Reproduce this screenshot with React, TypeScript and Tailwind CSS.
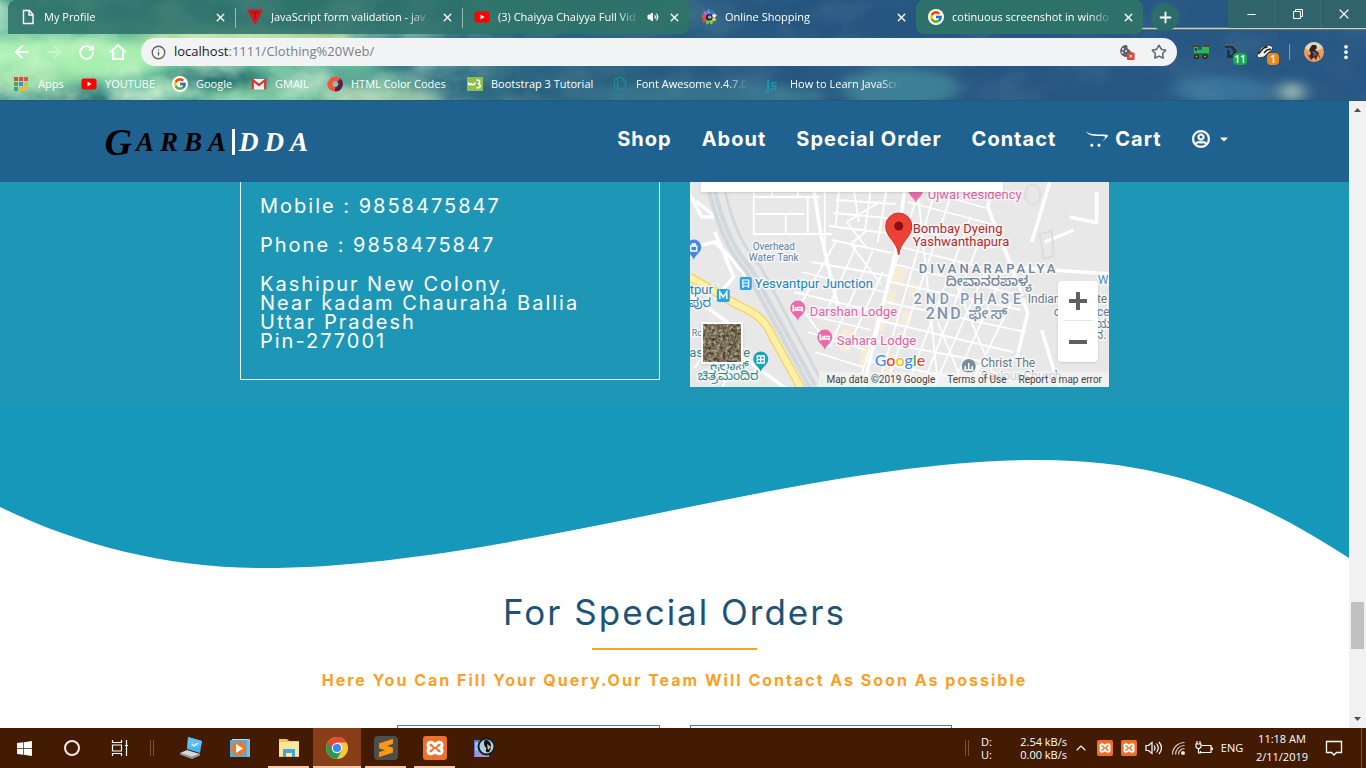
import type { ReactNode } from "react";
import {
  ArrowLeft,
  ArrowRight,
  ChevronUp,
  EllipsisVertical,
  Info,
  Minus,
  Plus,
  RotateCw,
  Star,
  Volume2,
  X,
} from "lucide-react";
import { FcGoogle } from "react-icons/fc";
import { FaCaretDown, FaOpencart, FaRegUserCircle, FaWindows } from "react-icons/fa";
import { SiSublimetext } from "react-icons/si";

function Sky() {
  const clouds: [number, number, number, number, string][] = [
    [120, 60, 260, 40, "#63bd9c"],
    [60, 58, 110, 20, "#a9f0b0"],
    [250, 40, 110, 12, "#b9dfa0"],
    [20, 95, 110, 12, "#4c9c92"],
    [340, 84, 80, 16, "#5fa898"],
    [380, 98, 60, 10, "#8fbf9f"],
    [215, 78, 50, 12, "#28746f"],
    [100, 101, 60, 7, "#27716d"],
    [270, 98, 60, 9, "#79c8a0"],
    [30, 78, 50, 12, "#93dca2"],
    [700, 96, 130, 14, "#35718c"],
    [900, 88, 60, 20, "#3d7f95"],
    [1220, 90, 50, 14, "#37739a"],
    [1292, 92, 10, 10, "#b5d0be"],
  ];
  return (
    <svg className="absolute inset-0 h-full w-full" viewBox="0 0 1366 101" preserveAspectRatio="none" aria-hidden="true">
      <defs>
        <linearGradient id="sky" x1="0" x2="1" y1="0" y2="0">
          <stop offset="0" stopColor="#4fa893" />
          <stop offset="0.25" stopColor="#3d8288" />
          <stop offset="0.38" stopColor="#2a6480" />
          <stop offset="0.6" stopColor="#255580" />
          <stop offset="1" stopColor="#275784" />
        </linearGradient>
        <filter id="soft" x="-50%" y="-50%" width="200%" height="200%">
          <feGaussianBlur stdDeviation="9 5" />
        </filter>
        <filter id="wisps" x="0" y="0" width="100%" height="100%">
          <feTurbulence type="fractalNoise" baseFrequency="0.018 0.026" numOctaves="4" seed="21" />
          <feColorMatrix values="0 0 0 0 .72  0 0 0 0 .95  0 0 0 0 .7  2 0 0 0 -.8" />
        </filter>
        <linearGradient id="fade" x1="0" x2="1" y1="0" y2="0">
          <stop offset="0" stopColor="#fff" />
          <stop offset="0.28" stopColor="#bbb" />
          <stop offset="0.4" stopColor="#222" />
          <stop offset="1" stopColor="#111" />
        </linearGradient>
        <mask id="skymask">
          <rect width="1366" height="101" fill="url(#fade)" />
        </mask>
      </defs>
      <rect width="1366" height="101" fill="url(#sky)" />
      <g filter="url(#soft)">
        {clouds.map(([cx, cy, rx, ry, fill]) => (
          <ellipse key={`${cx}-${cy}`} cx={cx} cy={cy} rx={rx} ry={ry} fill={fill} />
        ))}
      </g>
      <g mask="url(#skymask)">
        <rect width="1366" height="101" filter="url(#wisps)" />
      </g>
      <path d="M1140 28.5H1366" stroke="#d8d3a0" strokeWidth="1.5" />
      <path d="M0 100.5H1366" stroke="#1f5a70" />
    </svg>
  );
}

function YouTubeIcon() {
  return (
    <svg viewBox="0 0 16 16" className="h-4 w-4 shrink-0" aria-hidden="true">
      <rect x="0.5" y="2.5" width="15" height="11" rx="2.5" fill="#f00" />
      <path d="M6.5 5.6v4.8L10.6 8z" fill="#fff" />
    </svg>
  );
}

function GoogleBadge() {
  return (
    <span className="flex h-4 w-4 shrink-0 items-center justify-center rounded-full bg-white">
      <FcGoogle size={14} />
    </span>
  );
}

function ValidationIcon() {
  return (
    <svg viewBox="0 0 16 16" className="h-4 w-4 shrink-0" aria-hidden="true">
      <path d="M0 0.5h16L8 16z" fill="#e0121c" />
      <path d="M4.500 3.500h7M8 3.500V10" stroke="#7e1f2c" strokeWidth="1.300" />
    </svg>
  );
}

function FlowerIcon() {
  const petals = ["#5f93e8", "#3f72e0", "#f0f0f4", "#e9d44a", "#8fcf4c", "#6dc04f", "#e34d4d", "#e3563f", "#b26ad1"];
  return (
    <svg viewBox="0 0 16 16" className="h-4 w-4 shrink-0" aria-hidden="true">
      {petals.map((c, i) => (
        <path key={c} d="M8 8 5.500 2 8 0l1.500 2.500z" fill={c} transform={`rotate(${i * 40} 8 8)`} />
      ))}
      <circle cx="8.300" cy="8.300" r="3.300" fill="#16243a" />
      <circle cx="8.800" cy="8" r="1.600" fill="#fff" />
      <circle cx="8.800" cy="8" r="0.700" fill="#16243a" />
    </svg>
  );
}

type TabData = { title: string; icon: ReactNode; sound?: boolean; shape: string };

const tabs: TabData[] = [
  {
    title: "My Profile",
    icon: (
      <svg viewBox="0 0 16 16" className="h-4 w-4 shrink-0" fill="none" stroke="#fff" strokeWidth="1.400" aria-hidden="true">
        <path d="M3.500 1.500h6l3.500 4v9H3.500zM9 1.500V6h4" />
      </svg>
    ),
    shape: "rounded-tl-lg bg-[#2d7069]/85",
  },
  { title: "JavaScript form validation - jav", icon: <ValidationIcon />, shape: "bg-[#2d7069]/85" },
  { title: "(3) Chaiyya Chaiyya Full Vid", icon: <YouTubeIcon />, sound: true, shape: "rounded-br-lg bg-[#2f7468]/90" },
  { title: "Online Shopping", icon: <FlowerIcon />, shape: "" },
  { title: "cotinuous screenshot in windo", icon: <GoogleBadge />, shape: "rounded-lg bg-[#2f7468]/90" },
];

function TabStrip() {
  return (
    <div className="relative flex h-[34px] items-start pl-2">
      {tabs.map((tab, i) => (
        <div key={tab.title} className={`relative flex h-full min-w-0 max-w-[227px] flex-1 items-center gap-2 pr-2 pl-3 ${tab.shape}`}>
          {(i === 1 || i === 2) && <span className="absolute top-2 left-0 h-5 w-px bg-white/50" />}
          {tab.icon}
          <a href="#tab" className="min-w-0 flex-1 overflow-hidden whitespace-nowrap [mask-image:linear-gradient(to_right,#000_85%,transparent)]">
            {tab.title}
          </a>
          {tab.sound && <Volume2 size={12} fill="#fff" className="shrink-0" />}
          <button aria-label={`Close ${tab.title}`} className="flex w-[14px] shrink-0 justify-center">
            <X size={13} strokeWidth={2.6} />
          </button>
        </div>
      ))}
      <button aria-label="New tab" className="mt-[3px] ml-2 flex h-7 w-7 shrink-0 items-center justify-center rounded-full bg-[#2c6d6b]">
        <Plus size={17} strokeWidth={2.6} />
      </button>
      <div className="ml-auto flex h-7 shrink-0">
        <button aria-label="Minimize" className="flex w-[46px] items-center justify-center bg-[#30636b]">
          <Minus size={13} strokeWidth={1.8} />
        </button>
        <button aria-label="Restore" className="flex w-[46px] items-center justify-center border-l border-[#3b6d72] bg-[#30636b]">
          <svg viewBox="0 0 12 12" className="h-3 w-3" fill="none" stroke="#fff" aria-hidden="true">
            <path d="M1.5 3.5h7v7h-7zM3.5 3.5v-2h7v7h-2" />
          </svg>
        </button>
        <button aria-label="Close window" className="flex w-[46px] items-center justify-center border-l border-[#3b6d72] bg-[#30636b]">
          <X size={16} strokeWidth={1.7} />
        </button>
      </div>
    </div>
  );
}

function ToolbarButton({ label, children }: { label: string; children: ReactNode }) {
  return (
    <button aria-label={label} className="flex h-8 w-8 shrink-0 items-center justify-center">
      {children}
    </button>
  );
}

function Toolbar() {
  return (
    <div className="relative flex h-9 items-center pr-1 pl-[6px]">
      <ToolbarButton label="Back"><ArrowLeft size={20} strokeWidth={2.4} /></ToolbarButton>
      <ToolbarButton label="Forward"><ArrowRight size={20} strokeWidth={2.2} className="opacity-30" /></ToolbarButton>
      <ToolbarButton label="Reload"><RotateCw size={17} strokeWidth={2.7} /></ToolbarButton>
      <ToolbarButton label="Home">
        <svg viewBox="0 0 18 18" className="h-[18px] w-[18px]" fill="none" stroke="#fff" strokeWidth="2" aria-hidden="true">
          <path d="M1 9.500 9 2l8 7.500M4 8v8h10V8" />
        </svg>
      </ToolbarButton>
      <div className="ml-[7px] flex h-7 min-w-0 flex-1 items-center rounded-full bg-[#f1f3f4] px-[10px] text-[#5f6368]">
        <Info size={15} strokeWidth={2.2} className="mr-2 shrink-0" />
        <a href="#address" className="min-w-0 flex-1 truncate text-[13px] text-[#7b7f84]">
          <span className="text-[#202124]">localhost</span>:1111/Clothing%20Web/
        </a>
        <svg viewBox="0 0 16 16" className="mr-4 h-4 w-4 shrink-0" aria-label="Cookies blocked" role="img">
          <path d="M6.5 1A6 6 0 1 0 13 8c-2-.2-2-1.500-2-2C9 5.500 8 4 8.500 2Q8 1 6.500 1z" fill="#5f6368" />
          <circle cx="4" cy="5" r="1" fill="#f1f3f4" />
          <circle cx="3.500" cy="8.500" r="0.900" fill="#f1f3f4" />
          <circle cx="7" cy="7" r="0.900" fill="#f1f3f4" />
          <rect x="8" y="8.500" width="7.500" height="7.500" rx="1" fill="#db4437" />
          <path d="m10.200 10.700 3 3m0-3-3 3" stroke="#fff" />
        </svg>
        <Star size={16} strokeWidth={2.2} />
      </div>
      <div className="flex shrink-0 items-center pl-2">
        <ToolbarButton label="Train extension">
          <svg viewBox="0 0 18 16" className="h-4 w-[18px]" aria-hidden="true">
            <path d="M1 1h6v2H6v3h4V3h5V1h2v9H2V3H1z" fill="#35b358" />
            <path d="M0 1h8v2H0zM13 0h4v3h-4z" fill="#54452a" />
            <path d="M3 4h2v3H3z" fill="#1c4050" />
            <path d="M2 9h15v2H2z" fill="#187c3c" />
            <circle cx="4.500" cy="12.500" r="2.600" fill="#1c2a2a" />
            <circle cx="13" cy="12.500" r="2.600" fill="#1c2a2a" />
            <circle cx="4.500" cy="12.500" r="1" fill="#df9d42" />
            <circle cx="13" cy="12.500" r="1" fill="#df9d42" />
          </svg>
        </ToolbarButton>
        <div className="relative">
          <ToolbarButton label="Download extension">
            <svg viewBox="0 0 16 16" className="mr-1 h-4 w-4" aria-hidden="true">
              <path d="M2 1h5a6 6 0 0 1 6.500 6.500A6 6 0 0 1 7 14H4V6h3v5a3 3 0 0 0 3-3.500A3.500 3.500 0 0 0 6.500 4H2z" fill="#26313d" />
              <path d="M2 1h5a6 6 0 0 1 6 4" stroke="#65717c" fill="none" />
            </svg>
          </ToolbarButton>
          <span className="absolute right-[2px] bottom-[3px] flex h-3 w-[14px] items-center justify-center rounded-sm bg-[#15a84c] text-[10px] leading-3 font-semibold">11</span>
        </div>
        <div className="relative">
          <ToolbarButton label="Badger extension">
            <svg viewBox="0 0 18 16" className="h-4 w-[18px]" aria-hidden="true">
              <path d="M1 11 5 4l2-2 2 1 4-2 4 2-1 3-4 3-4 4-6 1z" fill="#eee" stroke="#202020" strokeWidth="0.800" />
              <path d="m2.500 10 5-6 4-1M8 9l3-3 4-1" stroke="#222" strokeWidth="1.500" fill="none" />
            </svg>
          </ToolbarButton>
          <span className="absolute right-[2px] bottom-[3px] flex h-3 w-3 items-center justify-center rounded-sm bg-[#e58a1f] text-[10px] leading-3 font-semibold">1</span>
        </div>
        <span className="mx-2 h-4 w-px bg-white/40" />
        <ToolbarButton label="Profile">
          <svg viewBox="0 0 20 20" className="h-5 w-5" aria-hidden="true">
            <circle cx="10" cy="10" r="10" fill="#e7a05c" />
            <path d="M1 6a10 10 0 0 1 18 0l-5 2-9 1z" fill="#d5d9c4" />
            <path d="M8 3h4l1 3-2 2 4 3-2 4-1 3-2-3-3 3-2-3 2-4-2-3z" fill="#33231d" />
            <path d="m8 9 4 1 1 3-3 2z" fill="#6b4a80" />
            <path d="m4 13 3 4m7-5 2 4" stroke="#b04a2d" strokeWidth="1.500" />
          </svg>
        </ToolbarButton>
        <ToolbarButton label="Menu"><EllipsisVertical size={18} strokeWidth={3} /></ToolbarButton>
      </div>
    </div>
  );
}

function AppsIcon() {
  const colors = ["#e2473c", "#e2473c", "#d6584c", "#46a65b", "#3d8be0", "#e6b93f", "#46a65b", "#e6b93f", "#e6b93f"];
  return (
    <svg viewBox="0 0 14 14" className="h-[14px] w-[14px] shrink-0" aria-hidden="true">
      {colors.map((c, i) => (
        <rect key={i} x={(i % 3) * 5} y={Math.floor(i / 3) * 5} width="4" height="4" fill={c} />
      ))}
    </svg>
  );
}

const bookmarks: { label: string; icon: ReactNode; box: string; faded?: boolean }[] = [
  { label: "Apps", box: "w-[67px]", icon: <span className="flex w-4 shrink-0"><AppsIcon /></span> },
  { label: "YOUTUBE", box: "w-[91px]", icon: <YouTubeIcon /> },
  { label: "Google", box: "w-[79px]", icon: <GoogleBadge /> },
  {
    label: "GMAIL",
    box: "w-[76px]",
    icon: (
      <svg viewBox="0 0 16 16" className="h-4 w-4 shrink-0" aria-hidden="true">
        <path d="M1 3h14v10.500H1z" fill="#f2f2f2" />
        <path d="M1.800 13.500V4L8 9l6.200-5v9.500" fill="none" stroke="#d8372c" strokeWidth="2.200" />
      </svg>
    ),
  },
  {
    label: "HTML Color Codes",
    box: "w-[140px]",
    icon: (
      <svg viewBox="0 0 16 16" className="h-4 w-4 shrink-0" fill="none" strokeWidth="4.500" aria-hidden="true">
        <path d="M12.500 4.500A5.300 5.300 0 1 0 8 13.300" stroke="#f0563d" />
        <path d="M12 4.200A5.300 5.300 0 0 1 8 13.300" stroke="#5c1f45" />
        <path d="M3 6a5.300 5.300 0 0 0 2 6.500" stroke="#f0563d" />
      </svg>
    ),
  },
  {
    label: "Bootstrap 3 Tutorial",
    box: "w-[145px]",
    icon: (
      <svg viewBox="0 0 16 14" className="h-[14px] w-4 shrink-0" aria-hidden="true">
        <rect width="16" height="14" fill="#8cc249" />
        <path d="M1.500 5.500c0 3 2.500 3 3 .5 0 2.500 3 2.500 3.500-.5M9.500 3.500c3-1.500 4.500 2 1.500 3.300 3.500.2 3 5-1.500 3.700" fill="none" stroke="#fff" strokeWidth="1.600" />
      </svg>
    ),
  },
  {
    label: "Font Awesome v.4.7.0",
    box: "w-[154px]",
    faded: true,
    icon: (
      <svg viewBox="0 0 16 16" className="h-4 w-4 shrink-0" fill="none" stroke="#1a8f82" strokeWidth="1.200" aria-hidden="true">
        <path d="M5.500 1.500h5l3 3v8h-8zM10.500 1.500v3h3M5.500 3.500h-3v11h8v-2" />
      </svg>
    ),
  },
  {
    label: "How to Learn JavaScri",
    box: "w-[137px]",
    faded: true,
    icon: <span className="w-4 shrink-0 text-[15px] leading-4 font-semibold text-[#1797b5]">Js</span>,
  },
];

function Bookmarks() {
  return (
    <nav aria-label="Bookmarks" className="relative flex h-[31px] items-start pt-[6px] pl-[14px]">
      {bookmarks.map((b) => (
        <a key={b.label} href="#bookmark" className={`flex h-4 shrink-0 items-center gap-2 ${b.box}`}>
          {b.icon}
          <span className={b.faded ? "[mask-image:linear-gradient(to_right,#000_80%,transparent)] whitespace-nowrap" : "whitespace-nowrap"}>
            {b.label}
          </span>
        </a>
      ))}
    </nav>
  );
}

function SiteNav() {
  return (
    <header className="bg-[#1f628f]">
      <div className="mx-auto flex h-[81px] max-w-[1140px] items-center justify-between">
        <a href="#home" aria-label="GarbAdda" className="flex items-center font-['Liberation_Serif',serif] font-bold text-black italic">
          <span className="text-[38px] leading-10">G</span>
          <span className="pl-1 text-[27px] leading-10 tracking-[6px]">ARBA</span>
          <span className="h-[26px] w-[3px] bg-white" />
          <span className="pl-1 text-[27px] leading-10 tracking-[6px] text-white">DDA</span>
        </a>
        <nav aria-label="Main" className="mb-[6px] flex items-center gap-[30px] pr-[15px] text-xl font-bold tracking-[1px] whitespace-nowrap text-white">
          <a href="#shop">Shop</a>
          <a href="#about">About</a>
          <a href="#special-order">Special Order</a>
          <a href="#contact">Contact</a>
          <a href="#cart" className="flex items-center gap-[7px]"><FaOpencart size={22} />Cart</a>
          <button aria-label="Account" className="flex items-center gap-2"><FaRegUserCircle size={18} className="stroke-white stroke-[16]" /><FaCaretDown size={12} /></button>
        </nav>
      </div>
    </header>
  );
}

function Pin({ x, y, color, children }: { x: number; y: number; color: string; children?: ReactNode }) {
  return (
    <g transform={`translate(${x} ${y})`}>
      <path d="M0 12C-1 7-7.500 5-7.500-1a7.500 7.500 0 0 1 15 0C7.500 5 1 7 0 12z" fill={color} />
      {children}
    </g>
  );
}

function Bed() {
  return <path d="M-4.500-4v6.500M4.500 2.500V-1.500h-5v2.500M-4.500 1h9M-3-1h1.500" stroke="#fff" strokeWidth="1.600" fill="none" />;
}

function MapCanvas() {
  return (
    <svg
      viewBox="0 0 420 205"
      preserveAspectRatio="xMidYMin slice"
      className="absolute inset-0 h-full w-full font-[Roboto,'Noto_Sans_Kannada','Noto_Sans',sans-serif]"
      role="img"
      aria-label="Map of Yeshwanthpur"
    >
      <rect width="420" height="205" fill="#e8e8e8" />
      <g fill="#f5edda">
        <path d="m205 82 13 3-6 20-10-3zM197 106l10 4-5 16-9-3zM186 132l12 3-5 15-10-4zM173 158l12 4-6 24-10-3zM221 10l14-4-3 16-10 3zM221 100l10 3-4 14-9-3zM214 128l10 3-5 15-9-3zM152 146l14 4-6 22-10-4zM208 150l9 3-5 14-8-3zM196 170l9 3-5 20-9-3z" />
      </g>
      <g fill="none" stroke="#fff" strokeWidth="1.800">
        <path d="M64 0v52h78M64 15h66M66 32h48M82 0v15M96 32v20M108 0v15M118 15v37M135 0v72M150 0l-4 45M163 0l6 40M182 0l-7 50M198 0l-10 60M146 18l60 4M144 31l65 6M139 44l66 8M142 58l60 13M122 80l78 14M112 90l82 20M104 110l84 20M115 132l66 16M118 150l58 18M125 170l48 15" />
        <path d="m147 58-37 66 30 40M167 63l-32 70M183 69l-43 96M193 90l-36 78M178 48l-17 14 30 40M190 20l-33 20 20 26M210 68 168 205M232 0l-45 140M248 0l-60 205M266 0l-70 205M281 35l-64 170M290 58l-58 147M300 80l-56 125M310 100l-48 105M322 120l-42 85" />
        <path d="m218 20 84 22M214 42l90 24M207 64l112 28M204 82l122 30M201 100l130 28M196 120l140 30M188 138l135 32M181 158l136 26M176 178l110 22M240 10l56 16M228 10l20 190M248 140l26 64M264 96l44 108" />
      </g>
      <g fill="none" stroke="#fff" strokeWidth="3.500">
        <path d="M0 12l12 23 14 0-20-16M25 50l19 45-19 22M50 85 25 60 0 66M44 80l25 28M0 113l47 34-8 18 58 42M123 0l8 52 18 76M216 0l-8 60-34 145M303 0l-5 25 24 60 16 46-11 45-42 10M322 85l98 7M355 60l29-12M380 35l28 6M407 40V10M360 0l-18 60M352 148l15 50 4 7" />
        <path d="m30 148-25 38m35-28-23 39m34-30-18 38" strokeWidth="2" />
      </g>
      <g fill="none" stroke="#d3d8dc">
        <path d="M20 0c8 34 17 63 39 88l64 117" strokeWidth="10" />
        <path d="M33 0c8 35 17 62 38 85l64 120" strokeWidth="3" />
        <path d="M20 0c8 34 17 63 39 88l64 117" strokeWidth="1" stroke="#eef0f1" />
      </g>
      <path d="M0 95l48 28c18 8 28 15 35 32l30 54" stroke="#f4d570" strokeWidth="9" fill="none" />
      <path d="M0 95l48 28c18 8 28 15 35 32l30 54" stroke="#fff0a8" strokeWidth="6" fill="none" />
      <g fill="none" stroke="#dddddd" strokeWidth="2">
        <path d="M338 4c10-6 16 8 10 16s-18-4-10-16zM350 52l12-3 2 25-10 3zM325 100l12-3 4 15-10 4z" />
      </g>
      <g stroke="#f7f7f7" strokeWidth="3" paintOrder="stroke" strokeLinejoin="round" fontSize="13">
        <g fill="#5f82ae" fontSize="10" textAnchor="middle">
          <text x="84" y="68">Overhead</text>
          <text x="84" y="79">Water Tank</text>
        </g>
        <g fill="#2482bd">
          <text x="65" y="106">Yesvantpur Junction</text>
          <text x="0" y="112">tpur</text>
          <text x="-9" y="125" fontSize="13">ತಪುರ</text>
          <text x="-14" y="175" fill="#33888d">ailas Theatre</text>
        </g>
        <g fill="#33888d">
          <text x="20" y="188">ಕೈಲಾಸ್</text>
          <text x="8" y="198">ಚಿತ್ರಮಂದಿರ</text>
        </g>
        <g fill="#e560a4">
          <text x="238" y="17">Ujwal Residency</text>
          <text x="120" y="134">Darshan Lodge</text>
          <text x="147" y="163">Sahara Lodge</text>
        </g>
        <g fill="#b5282c">
          <text x="223" y="51">Bombay Dyeing</text>
          <text x="223" y="64">Yashwanthapura</text>
        </g>
        <g fill="#70859a" fontWeight="500" fontSize="14">
          <text x="229" y="91" fontSize="13" className="tracking-[3px]">DIVANARAPALYA</text>
          <text x="256" y="104">ದೀವಾನರಪಾಳ್ಯ</text>
          <text x="224" y="122" fill="#8193ab" className="tracking-[4px]">2ND PHASE</text>
          <text x="236" y="137" fill="#8193ab" fontSize="16" className="tracking-[2px]">2ND ಫೇಸ್</text>
        </g>
        <g fill="#68798a" fontSize="12">
          <text x="338" y="121">Indian Institute</text>
          <text x="364" y="134">of Science</text>
          <text x="405" y="146">ಯ</text>
          <text x="405" y="157">ನ.</text>
          <text x="291" y="185">Christ The</text>
          <text x="291" y="198">Saviour Church</text>
          <text x="408" y="102" fill="#4a91c4">Wa</text>
          <text x="2" y="154" fontSize="9">Road</text>
        </g>
      </g>
      <rect x="50" y="95" width="12" height="13" rx="2" fill="#29a4e4" />
      <path d="M53 98h6v6h-6zM53 101h6M54 104l-1 2M58 104l1 2" fill="none" stroke="#fff" strokeWidth="1.200" />
      <rect x="27" y="107" width="13" height="13" rx="2" fill="#29a4e4" />
      <path d="M30 117v-7l3.500 5 3.500-5v7" fill="none" stroke="#fff" strokeWidth="1.600" />
      <Pin x={108} y={127} color="#ea6bab"><Bed /></Pin>
      <Pin x={135} y={156} color="#ea6bab"><Bed /></Pin>
      <Pin x={226} y={9} color="#ea6bab" />
      <Pin x={4} y={66} color="#4a86e8">
        <path d="M-3 3v-5h6v5zM-1.500-2v-2h3v2" fill="none" stroke="#fff" strokeWidth="1.300" />
      </Pin>
      <Pin x={71} y={178} color="#12a5b5">
        <path d="M-3.500-4h7v7h-7zM0-4v7M-3.500-.500h7" fill="none" stroke="#fff" strokeWidth="1.300" />
      </Pin>
      <circle cx="279" cy="184" r="7" fill="#78909c" />
      <path d="M275.500 188v-4m3.500 4v-7m3.500 7v-4m-8 4h9" stroke="#fff" strokeWidth="1.500" />
      <path d="M209 73c-2-15-13-17-13-29a13 13 0 0 1 26 0c0 12-11 14-13 29z" fill="#ea4335" stroke="#c5352b" />
      <circle cx="209" cy="44" r="4.500" fill="#8b0f12" />
      <g fontSize="16" fontWeight="500" stroke="#fff" strokeWidth="2" paintOrder="stroke" className="font-[Lato,sans-serif]">
        <text x="185" y="184">
          <tspan fill="#4285f4">G</tspan>
          <tspan fill="#ea4335">o</tspan>
          <tspan fill="#fbbc05">o</tspan>
          <tspan fill="#4285f4">g</tspan>
          <tspan fill="#34a853">l</tspan>
          <tspan fill="#ea4335">e</tspan>
        </text>
      </g>
    </svg>
  );
}

function ContactMap() {
  return (
    <div className="relative h-[205px] min-w-0 overflow-hidden bg-[#e9e9e9]">
      <MapCanvas />
      <div className="absolute top-0 left-[11px] h-[10px] w-[302px] max-w-full bg-white shadow" />
      <button aria-label="Satellite view" className="absolute top-[140px] left-[11px] h-[42px] w-[42px] overflow-hidden border-2 border-white bg-[#857969] shadow">
        <svg className="h-full w-full" viewBox="0 0 38 38" aria-hidden="true">
          <filter id="ground" colorInterpolationFilters="sRGB">
            <feTurbulence type="fractalNoise" baseFrequency="0.350" numOctaves="3" seed="3" />
            <feColorMatrix values=".8 0 0 0 .08  .8 0 0 0 .04  .75 0 0 0 -.02  0 0 0 0 1" />
          </filter>
          <rect width="38" height="38" filter="url(#ground)" />
          <path d="m30 0 3 10-3 12M30 20l-6 18" stroke="#4e4a3c" fill="none" strokeWidth="0.800" />
        </svg>
      </button>
      <div className="absolute top-[99px] right-[11px] flex w-10 flex-col rounded-sm bg-white px-[5px] text-[#606060] shadow">
        <button aria-label="Zoom in" className="flex h-10 items-center justify-center border-b border-[#e6e6e6]">
          <svg viewBox="0 0 18 18" className="h-[18px] w-[18px]" aria-hidden="true"><path d="M0 9h18M9 0v18" stroke="currentColor" strokeWidth="4" /></svg>
        </button>
        <button aria-label="Zoom out" className="flex h-[41px] items-center justify-center">
          <svg viewBox="0 0 18 18" className="h-[18px] w-[18px]" aria-hidden="true"><path d="M0 9h18" stroke="currentColor" strokeWidth="4" /></svg>
        </button>
      </div>
      <div className="absolute right-0 bottom-0 flex h-[15px] items-center gap-3 bg-[#f5f5f5]/70 px-[7px] font-[Roboto,sans-serif] text-[10px] leading-none text-[#444]">
        <span>Map data ©2019 Google</span>
        <a href="#terms">Terms of Use</a>
        <a href="#report">Report a map error</a>
      </div>
    </div>
  );
}

function ContactSection() {
  return (
    <section id="contact" className="bg-[#1e97b7] pb-[17px]">
      <div className="mx-auto grid max-w-[869px] grid-cols-2 items-start gap-[30px]">
        <address className="flex min-w-0 flex-col gap-5 border border-t-0 border-white/90 pt-[15px] pb-7 pl-[19px] text-xl leading-[19px] tracking-[2px] text-white not-italic">
          <p>Mobile : 9858475847</p>
          <p>Phone : 9858475847</p>
          <p>
            Kashipur New Colony,
            <br />
            Near kadam Chauraha Ballia
            <br />
            Uttar Pradesh
            <br />
            Pin-277001
          </p>
        </address>
        <ContactMap />
      </div>
    </section>
  );
}

function SpecialOrders() {
  return (
    <section id="special-order" className="bg-white">
      <svg viewBox="0 0 1349 166" preserveAspectRatio="none" className="block h-[166px] w-full bg-[#1698bb]" aria-hidden="true">
        <path d="M0 103C80 142 170 164 262 164C510 164 800 56 1040 56C1170 56 1260 96 1349 154V166H0z" fill="#fff" />
      </svg>
      <div className="flex flex-col items-center">
        <h2 className="pt-[18px] text-[35px] leading-[48px] tracking-[2px] text-[#1d5377]">For Special Orders</h2>
        <hr className="mt-3 h-[2px] w-[165px] border-0 bg-[#f0a81c]" />
        <p className="mt-[18px] text-base leading-6 font-bold tracking-[2px] text-[#fba026]">
          Here You Can Fill Your Query.Our Team Will Contact As Soon As possible
        </p>
        <form className="mt-[33px] grid w-full max-w-[555px] grid-cols-2 gap-[30px]">
          <input aria-label="First name" className="h-10 min-w-0 border border-[#4f7d9c]" />
          <input aria-label="Last name" className="h-10 min-w-0 border border-[#4f7d9c]" />
        </form>
      </div>
    </section>
  );
}

function ScrollTrack() {
  return (
    <div className="flex w-[17px] shrink-0 flex-col items-center bg-[#f1f1f1]" aria-hidden="true">
      <svg viewBox="0 0 17 17" className="h-[17px] w-[17px]"><path d="M5 11h7L8.500 7z" fill="#505050" /></svg>
      <div className="flex-[484]" />
      <div className="h-[47px] w-[13px] bg-[#c1c1c1]" />
      <div className="flex-[62]" />
      <svg viewBox="0 0 17 17" className="h-[17px] w-[17px]"><path d="M5 6h7l-3.500 4z" fill="#505050" /></svg>
    </div>
  );
}

function ChromeIcon() {
  return (
    <svg viewBox="0 0 22 22" className="h-[22px] w-[22px]" aria-hidden="true">
      <circle cx="11" cy="11" r="11" fill="#f9c932" />
      <path d="M11 11 1.500 5.500A11 11 0 0 0 11 22l4.800-8.300z" fill="#299b55" />
      <path d="M1.500 5.500A11 11 0 0 1 20.500 5.500H11L6.500 13.500z" fill="#df4a3b" />
      <circle cx="11" cy="11" r="5.200" fill="#fff" />
      <circle cx="11" cy="11" r="4.100" fill="#4285f4" />
    </svg>
  );
}

function XamppIcon({ large }: { large?: boolean }) {
  return (
    <svg viewBox="0 0 24 24" className={large ? "h-6 w-6" : "h-4 w-4"} aria-hidden="true">
      <rect width="24" height="24" rx="3" fill="#f0702a" />
      <path
        d="M12 9.500C10 5.500 5 5 5 9c0 2 1.500 3 3 3-1.500 0-3 1-3 3 0 4 5 3.500 7-.5 2 4 7 4.500 7 .5 0-2-1.500-3-3-3 1.500 0 3-1 3-3 0-4-5-3.500-7 .5z"
        fill="none"
        stroke="#fff"
        strokeWidth="3"
        strokeLinejoin="round"
      />
    </svg>
  );
}

const taskItems: { label: string; icon: ReactNode; state?: "open" | "active" }[] = [
  {
    label: "Remote desktop",
    icon: (
      <svg viewBox="0 0 24 24" className="h-6 w-6" aria-hidden="true">
        <path d="m9 1 14 4-2 12-13-4z" fill="#45b5f3" />
        <path d="m9 1 14 4-1 5-13.500 2z" fill="#5fc0f7" />
        <path d="m13 8 2 2 4-3" stroke="#fff" strokeWidth="1.300" fill="none" />
        <path d="m1 17 7-3 13 4-8 3z" fill="#d7d7d7" />
        <path d="m1 17 12 4 8-3v1.500L13 23 1 18.500z" fill="#999" />
      </svg>
    ),
  },
  {
    label: "Media player",
    icon: (
      <svg viewBox="0 0 24 24" className="h-6 w-6" aria-hidden="true">
        <path d="M4 3h18v18H4z" fill="#bfdcea" />
        <path d="M2 4h17v17H2z" fill="#5aa9d2" />
        <path d="M19 3h3v18h-3z" fill="#85bcd6" />
        <circle cx="10.500" cy="12.500" r="7" fill="#f27624" />
        <path d="m8 8 7 4.500L8 17z" fill="#fff" />
      </svg>
    ),
  },
  {
    label: "File explorer",
    state: "open",
    icon: (
      <svg viewBox="0 0 24 24" className="h-6 w-6" aria-hidden="true">
        <path d="M2 3h8l2 2h10v16H2z" fill="#f4c94f" />
        <path d="M2 6h20v14H2z" fill="#fde79b" />
        <path d="M6 21v-8h12v8h-3v-4H9v4z" fill="#3da7df" />
      </svg>
    ),
  },
  { label: "Chrome", state: "active", icon: <ChromeIcon /> },
  {
    label: "Sublime Text",
    state: "open",
    icon: (
      <span className="flex h-6 w-6 items-center justify-center rounded-sm bg-[#4d4d4a] text-[#fc9713]">
        <SiSublimetext size={18} />
      </span>
    ),
  },
  { label: "XAMPP", state: "open", icon: <XamppIcon large /> },
  {
    label: "Image viewer",
    icon: (
      <svg viewBox="0 0 24 24" className="h-6 w-6" aria-hidden="true">
        <path d="M2 4h13v17H2z" fill="#5b77d1" />
        <path d="M3 6h8v13H3z" fill="#8ac7ea" />
        <path d="M3 15h14v6H3z" fill="#a592dc" />
        <circle cx="14.500" cy="10.500" r="8" fill="#a9d3e0" stroke="#181c22" strokeWidth="2" />
        <path d="M13 4c6-1 8 7 4 12-3 1-4-1-2.500-4-3-2-3-6-1.500-8z" fill="#111" />
        <path d="m15 8 4 3-3 3z" fill="#eeb68a" />
      </svg>
    ),
  },
];

function Taskbar() {
  return (
    <footer className="flex h-10 shrink-0 items-center bg-[#421b02] text-[11px] text-white">
      <button aria-label="Start" className="flex w-12 justify-center"><FaWindows size={17} /></button>
      <button aria-label="Search" className="flex w-12 justify-center"><span className="h-4 w-4 rounded-full border-2 border-[#f3e9e4]" /></button>
      <button aria-label="Task view" className="flex w-12 justify-center">
        <svg viewBox="0 0 18 16" className="h-4 w-[18px]" fill="none" stroke="#fff" strokeWidth="1.200" aria-hidden="true">
          <path d="M1.500 0v2.500h9V0M1.500 16v-2.500h9V16M1.500 5h9v6h-9zM15.500 0v16M14 5.500h3" />
        </svg>
      </button>
      <span className="mr-3 ml-[6px] h-4 w-1 border-x border-[#75533d]" />
      {taskItems.map((t) => (
        <button
          key={t.label}
          aria-label={t.label}
          className={
            t.state === "active"
              ? "flex h-full w-12 items-center justify-center border-b-2 border-[#f7c8a9] bg-[#883f17] pt-[2px]"
              : "relative flex h-full w-[49px] items-center justify-center"
          }
        >
          {t.icon}
          {t.state === "open" && <span className="absolute inset-x-1 bottom-0 h-[2px] bg-[#f7c8a9]" />}
        </button>
      ))}
      <div className="ml-auto flex h-full items-center">
        <span className="mr-3 h-4 w-1 border-x border-[#75533d]" />
        <div className="grid w-[86px] grid-cols-[auto_1fr] leading-[13px]">
          <span>D:</span>
          <span className="text-right">2.54 kB/s</span>
          <span>U:</span>
          <span className="text-right">0.00 kB/s</span>
        </div>
        <button aria-label="Show hidden icons" className="ml-[6px] flex w-4 justify-center"><ChevronUp size={18} strokeWidth={1.600} /></button>
        <span className="ml-2"><XamppIcon /></span>
        <span className="ml-2"><XamppIcon /></span>
        <button aria-label="Volume" className="ml-2">
          <svg viewBox="0 0 18 16" className="h-4 w-[18px]" fill="none" stroke="#fff" strokeWidth="1.200" aria-hidden="true">
            <path d="M1 5.500h2.500L7 2.500v11l-3.500-3H1zM9 5.500q2 2.500 0 5M11.500 3.500q3.500 4.500 0 9M14 2q5 6 0 12" />
          </svg>
        </button>
        <button aria-label="Network" className="ml-2">
          <svg viewBox="0 0 16 16" className="h-4 w-4" fill="none" stroke="#d8c9c0" strokeWidth="1.200" aria-hidden="true">
            <path d="M1.500 14.500A12 12 0 0 1 13.500 2.500M4.500 14.500a9 9 0 0 1 9-9M7.500 14.500a6 6 0 0 1 6-6" />
            <circle cx="12" cy="13" r="1.500" fill="#fff" />
          </svg>
        </button>
        <button aria-label="Battery" className="ml-2">
          <svg viewBox="0 0 18 16" className="h-4 w-[18px]" fill="none" stroke="#fff" strokeWidth="1.200" aria-hidden="true">
            <path d="M7 5.500h9v7H5.500V11M16 8h1.500v2M2 1v3M5 1v3M1 4h5v3L4.500 8.500h-2L1 7zM3.500 8.500V13H6" />
          </svg>
        </button>
        <span className="w-[38px] text-center">ENG</span>
        <div className="w-[62px] text-center leading-[18px] whitespace-nowrap">
          11:18 AM
          <br />
          2/11/2019
        </div>
        <button aria-label="Notifications" className="mr-[18px] ml-3 flex w-[18px] justify-center">
          <svg viewBox="0 0 18 18" className="h-[18px] w-[18px]" fill="none" stroke="#fff" strokeWidth="1.300" aria-hidden="true">
            <path d="M1.500 2.500h15v11h-5L9 16l-2.500-2.500h-5z" />
          </svg>
        </button>
        <span className="mr-1 h-full w-px bg-[#75533d]" />
      </div>
    </footer>
  );
}

export default function App() {
  return (
    <div className="flex h-screen flex-col overflow-hidden bg-white font-['Open_Sans',sans-serif]">
      <div className="relative shrink-0 text-[11px] text-white">
        <Sky />
        <TabStrip />
        <Toolbar />
        <Bookmarks />
      </div>
      <div className="flex min-h-0 flex-1">
        <main className="min-w-0 flex-1 overflow-hidden font-[Inter,sans-serif]">
          <SiteNav />
          <ContactSection />
          <SpecialOrders />
        </main>
        <ScrollTrack />
      </div>
      <Taskbar />
    </div>
  );
}
